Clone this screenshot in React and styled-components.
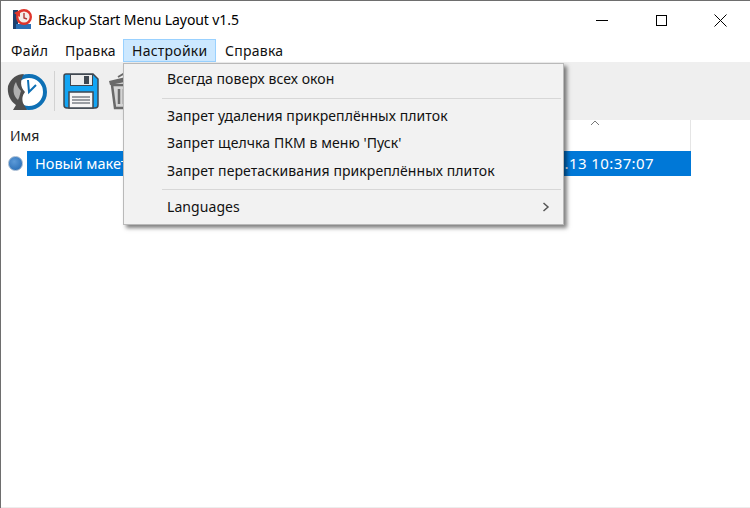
import React from "react";
import styled, { createGlobalStyle } from "styled-components";

const GlobalStyle = createGlobalStyle`
  html, body {
    margin: 0;
    padding: 0;
    background: #fff;
  }
  body {
    font-family: "Noto Sans", "Open Sans", sans-serif;
    font-size: 14px;
    color: #111;
  }
`;

const Win = styled.div`
  position: relative;
  box-sizing: border-box;
  width: 750px;
  height: 508px;
  background: #fff;
  border-top: 1px solid #6e6e6e;
  border-left: 1px solid #6e6e6e;
  display: flex;
  flex-direction: column;
  overflow: hidden;
`;

const TitleBar = styled.div`
  height: 38px;
  display: flex;
  align-items: center;
  padding-left: 12px;
  flex: none;
`;

const TitleLeft = styled.div`
  display: flex;
  align-items: center;
  margin-bottom: 2px;
`;

const AppTitle = styled.span`
  margin-left: 5px;
  font-size: 14px;
  letter-spacing: -0.1px;
  color: #000;
`;

const WinButtons = styled.div`
  margin-left: auto;
  display: flex;
  height: 100%;
`;

const WinButton = styled.div`
  width: 59px;
  display: flex;
  align-items: center;
  justify-content: center;
`;

const MenuBar = styled.div`
  height: 23px;
  display: flex;
  flex: none;
  padding-left: 2px;
`;

const MenuItem = styled.div`
  box-sizing: border-box;
  height: 23px;
  line-height: 22px;
  padding: 0 ${(p) => p.$pad || 8}px;
  font-size: 14px;
  letter-spacing: 0.25px;
  color: #111;
  width: ${(p) => p.$w}px;
  white-space: nowrap;
  background: ${(p) => (p.$active ? "#cce8ff" : "transparent")};
  border: 1px solid ${(p) => (p.$active ? "#99d1ff" : "transparent")};
`;

const Toolbar = styled.div`
  height: 58px;
  flex: none;
  background: #efefef;
  display: flex;
  align-items: center;
  padding: 0 0 0 6px;
`;

const ToolSep = styled.div`
  width: 1px;
  height: 40px;
  margin: 0 8px 0 7px;
  background: #d2d2d2;
`;

const TrashWrap = styled.div`
  margin-left: 9px;
  display: flex;
`;

const ListArea = styled.div`
  flex: 1;
  position: relative;
  padding-left: 4px;
`;

const ListHead = styled.div`
  box-sizing: border-box;
  width: 686px;
  height: 31px;
  display: flex;
  align-items: center;
  padding-left: 5px;
  justify-content: space-between;
  border-right: 1px solid #e5e5e5;
  font-size: 14px;
  color: #222;
`;

const SortArrow = styled.svg`
  margin-right: 90px;
  margin-top: -26px;
`;

const Row = styled.div`
  width: 686px;
  height: 25px;
  display: flex;
  align-items: center;
`;

const Bullet = styled.div`
  width: 15px;
  height: 15px;
  border-radius: 50%;
  flex: none;
  margin-left: 3px;
  margin-right: 4px;
  background: radial-gradient(circle at 40% 35%, #5c9ad8, #2f73ba 75%);
  border: 1px solid #9fb6cf;
  box-sizing: border-box;
`;

const Selection = styled.div`
  flex: 1;
  height: 25px;
  line-height: 25px;
  background: #0078d7;
  color: #fff;
  padding: 0 37px 0 8px;
  display: flex;
  justify-content: space-between;
  font-size: 14.5px;
`;

const DateCell = styled.span`
  font-size: 15px;
  letter-spacing: 0.4px;
`;

const Dropdown = styled.div`
  position: absolute;
  left: 122px;
  top: 62px;
  box-sizing: border-box;
  width: 441px;
  height: 162px;
  background: #f2f2f2;
  border: 1px solid #b9b9b9;
  box-shadow: 3px 3px 4px rgba(0, 0, 0, 0.5);
  padding: 1px 2px;
`;

const DropItem = styled.div`
  height: 27.5px;
  line-height: 25px;
  padding-left: 41px;
  padding-right: 11px;
  display: flex;
  align-items: center;
  justify-content: space-between;
  font-size: 14px;
  letter-spacing: 0.07px;
  color: #111;
`;

const DropSep = styled.div`
  height: 1px;
  background: #d7d7d7;
  margin: 5px 0 3px 36px;
`;

const BottomLine = styled.div`
  position: absolute;
  left: 0;
  right: 0;
  bottom: 0;
  height: 1px;
  background: #ededed;
`;

const AppLogo = () => (
  <svg width="20" height="20" viewBox="0 0 20 20">
    <rect x="0" y="1" width="5" height="19" fill="#1c3f6e" />
    <rect x="3" y="15" width="15" height="5" fill="#2b6fb5" />
    <circle cx="11" cy="8" r="6.8" fill="#f4efe9" stroke="#e0352b" strokeWidth="2.4" />
    <path d="M1 4 L7 1 L7 8 Z" fill="#e0352b" />
    <path d="M11 4 V9 L14 10" fill="none" stroke="#b03a36" strokeWidth="1.4" />
  </svg>
);

const ClockIcon = () => (
  <svg width="40" height="39" viewBox="0 0 40 39">
    <circle cx="22" cy="20" r="16" fill="#fff" stroke="#0e70b5" strokeWidth="4" />
    <path d="M21 8 L22 20 L29 13" fill="none" stroke="#0e70b5" strokeWidth="2" />
    <path
      d="M17 2 C10 2 4 6 1 14 C0 22 3 29 9 33 L6 38 H20 L16 31 C15 27 15 24 18 20 C13 15 13 8 17 2 Z"
      fill="#4f4f4f"
    />
    <path d="M9 10 C5 16 6 24 11 28 C13 24 13 21 14 19 C12 17 10 14 9 10 Z" fill="#b0b0b0" />
  </svg>
);

const SaveIcon = () => (
  <svg width="36" height="36" viewBox="0 0 36 36">
    <path d="M3 1 H30 L35 6 V32 Q35 35 32 35 H4 Q1 35 1 32 V3 Q1 1 3 1 Z" fill="#12a5f4" stroke="#3f4750" strokeWidth="1.5" />
    <rect x="7.5" y="1.5" width="22" height="11" fill="#ececec" stroke="#3f4750" />
    <rect x="21" y="3" width="5" height="8" fill="#3f4750" />
    <rect x="6" y="19" width="24" height="16" fill="#f6f6f6" stroke="#3f4750" strokeWidth="1.5" />
    <path d="M9 24 H27 M9 27 H27 M9 30 H27" stroke="#3f4750" />
  </svg>
);

const TrashIcon = () => (
  <svg width="28" height="38" viewBox="0 0 28 38">
    <path d="M1 9 L26 3 L27 8 L2 13 Z" fill="#6a6a6a" />
    <path d="M10 5 L17 1 H21 V4" fill="none" stroke="#6a6a6a" strokeWidth="2" />
    <path d="M4 13 H26 V36 H7 Z" fill="#d6d6d6" stroke="#6a6a6a" strokeWidth="2.5" />
    <path d="M11 17 V32 M16 17 V32 M21 17 V32" stroke="#6a6a6a" strokeWidth="2.5" />
  </svg>
);

const Chevron = () => (
  <svg width="8" height="10" viewBox="0 0 8 10">
    <path d="M1.5 1 L6 5 L1.5 9" fill="none" stroke="#555" strokeWidth="1.5" />
  </svg>
);

const App = () => (
  <>
    <GlobalStyle />
    <Win>
      <TitleBar>
        <TitleLeft>
          <AppLogo />
          <AppTitle>Backup Start Menu Layout v1.5</AppTitle>
        </TitleLeft>
        <WinButtons>
          <WinButton>
            <svg width="13" height="13" viewBox="0 0 13 13">
              <path d="M0 6.5 H12" stroke="#000" />
            </svg>
          </WinButton>
          <WinButton>
            <svg width="13" height="13" viewBox="0 0 13 13">
              <rect x="1.5" y="1.5" width="10" height="10" fill="none" stroke="#000" />
            </svg>
          </WinButton>
          <WinButton>
            <svg width="13" height="13" viewBox="0 0 13 13">
              <path d="M0.5 0.5 L12.5 12.5 M12.5 0.5 L0.5 12.5" stroke="#000" />
            </svg>
          </WinButton>
        </WinButtons>
      </TitleBar>
      <MenuBar>
        <MenuItem $w={53} $pad={7}>Файл</MenuItem>
        <MenuItem $w={67}>Правка</MenuItem>
        <MenuItem $w={93} $active>Настройки</MenuItem>
        <MenuItem $w={70}>Справка</MenuItem>
      </MenuBar>
      <Toolbar>
        <ClockIcon />
        <ToolSep />
        <SaveIcon />
        <TrashWrap>
          <TrashIcon />
        </TrashWrap>
      </Toolbar>
      <ListArea>
        <ListHead>
          <span>Имя</span>
          <SortArrow width="10" height="6" viewBox="0 0 10 6">
            <path d="M1 5 L5 1 L9 5" fill="none" stroke="#777" />
          </SortArrow>
        </ListHead>
        <Row>
          <Bullet />
          <Selection>
            <span>Новый макет</span>
            <DateCell>2020.11.13 10:37:07</DateCell>
          </Selection>
        </Row>
        <BottomLine />
      </ListArea>
      <Dropdown>
        <DropItem>Всегда поверх всех окон</DropItem>
        <DropSep />
        <DropItem>Запрет удаления прикреплённых плиток</DropItem>
        <DropItem>Запрет щелчка ПКМ в меню 'Пуск'</DropItem>
        <DropItem>Запрет перетаскивания прикреплённых плиток</DropItem>
        <DropSep />
        <DropItem>
          Languages
          <Chevron />
        </DropItem>
      </Dropdown>
    </Win>
  </>
);

export default App;
